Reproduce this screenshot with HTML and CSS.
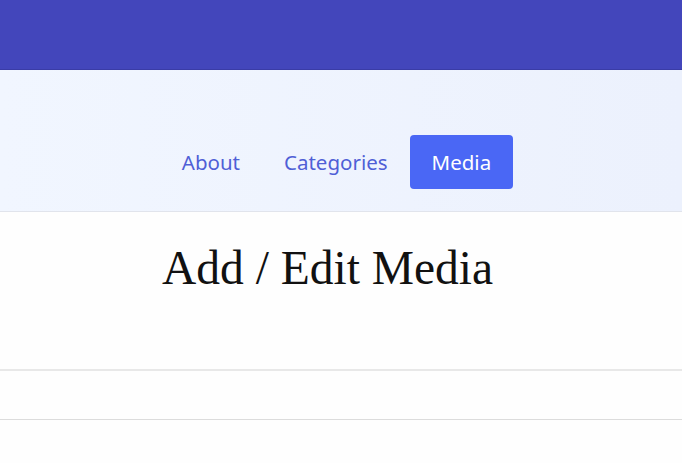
FILE: index.html
```html
<!DOCTYPE html>
<html lang="en">
<head>
<meta charset="utf-8">
<title>Add / Edit Media</title>
<link rel="stylesheet" href="styles.css">
</head>
<body>
<header class="topbar"></header>
<nav class="navband">
  <ul class="navlist">
    <li><a class="navlink" href="#">About</a></li>
    <li><a class="navlink" href="#">Categories</a></li>
    <li><a class="navlink active" href="#">Media</a></li>
  </ul>
</nav>
<main class="main">
  <h1 class="title">Add / Edit Media</h1>
  <section class="panel"></section>
</main>
</body>
</html>
```
FILE: styles.css
```css
html, body {
  margin: 0;
  padding: 0;
  background: #fefefe;
}
.topbar {
  height: 69px;
  background: #4346bb;
  border-bottom: 1px solid #3a3ca6;
}
.navband {
  height: 141px;
  background: linear-gradient(90deg, #f1f6ff 0%, #ecf1fd 100%);
  border-bottom: 1px solid #e1e4ec;
  display: flex;
  align-items: flex-end;
  justify-content: center;
  padding-right: 9px;
}
.navlist {
  list-style: none;
  margin: 0 0 22px 0;
  padding: 0;
  display: flex;
}
.navlink {
  display: block;
  padding: 12px 22px;
  font-family: "Noto Sans", "Open Sans", sans-serif;
  font-size: 20.5px;
  line-height: 30px;
  color: #4f5fd6;
  text-decoration: none;
  border-radius: 4px;
}
.navlink.active {
  background: #4a67f5;
  color: #ffffff;
}
.main {
  padding-left: 162px;
}
.title {
  margin: 0;
  padding-top: 28px;
  font-family: "Liberation Serif", serif;
  font-weight: normal;
  font-size: 47.5px;
  line-height: 56px;
  color: #111;
}
.panel {
  margin-top: 73px;
  margin-left: -162px;
  height: 48px;
  border-top: 2px solid #e8e8e8;
  border-bottom: 1px solid #dcdcdc;
}
```
